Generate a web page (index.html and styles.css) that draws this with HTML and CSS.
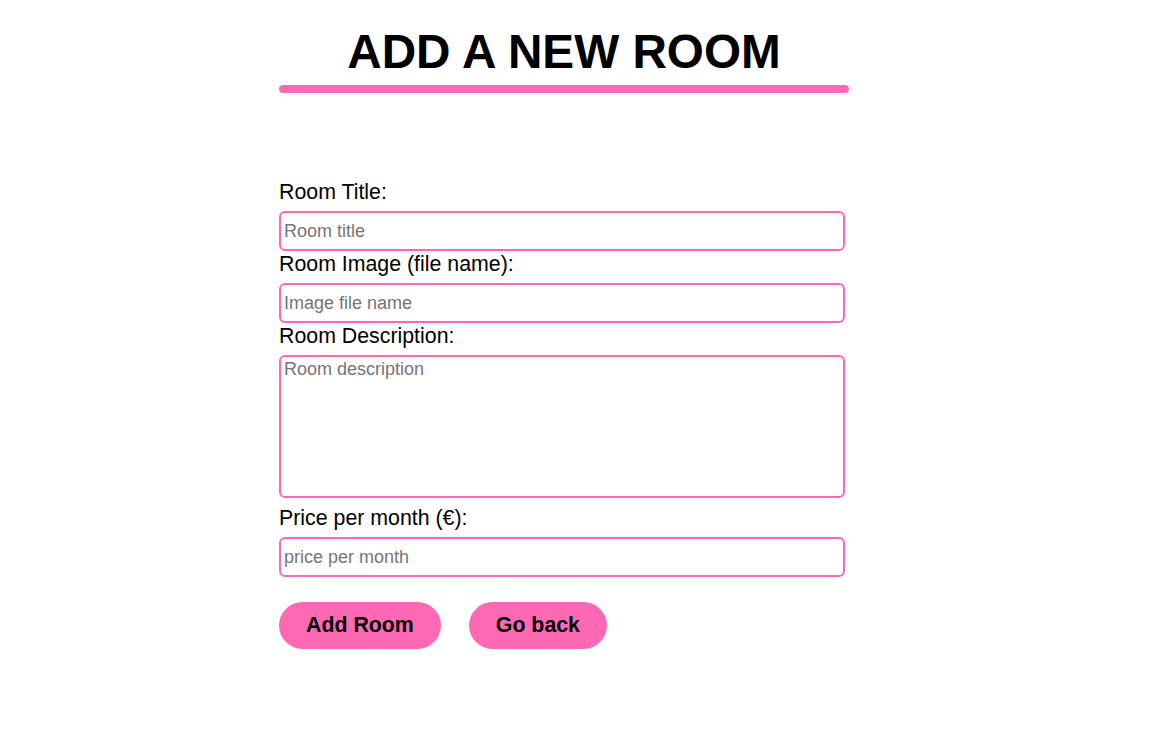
FILE: index.html
```html
<!DOCTYPE html>
<html lang="en">
<head>
<meta charset="utf-8">
<title>Add a new room</title>
<link rel="stylesheet" href="styles.css">
</head>
<body>
<main class="page">
  <header class="heading">
    <h1 class="title">ADD A NEW ROOM</h1>
    <div class="title-bar"></div>
  </header>
  <form class="room-form">
    <label class="field-label" for="title">Room Title:</label>
    <input class="field-input" id="title" type="text" placeholder="Room title">
    <label class="field-label" for="image">Room Image (file name):</label>
    <input class="field-input" id="image" type="text" placeholder="Image file name">
    <label class="field-label" for="desc">Room Description:</label>
    <textarea class="field-input field-area" id="desc" placeholder="Room description"></textarea>
    <label class="field-label" for="price">Price per month (€):</label>
    <input class="field-input" id="price" type="text" placeholder="price per month">
    <div class="actions">
      <button class="btn" type="submit">Add Room</button>
      <button class="btn" type="button">Go back</button>
    </div>
  </form>
</main>
</body>
</html>
```
FILE: styles.css
```css
html, body {
  margin: 0;
  padding: 0;
  background: #ffffff;
}
body {
  font-family: "Liberation Sans", Arial, sans-serif;
  color: #000;
}
.page {
  width: 570px;
  margin-left: 279px;
  padding-top: 24px;
}
.heading {
  display: flex;
  flex-direction: column;
  align-items: stretch;
}
.title {
  margin: 0;
  font-size: 47.7px;
  font-weight: bold;
  text-align: center;
  line-height: 55px;
}
.title-bar {
  height: 8px;
  margin-top: 6px;
  background: #ff69b4;
  border-radius: 4px;
}
.room-form {
  display: flex;
  flex-direction: column;
  align-items: flex-start;
  margin-top: 88px;
}
.field-label {
  font-size: 21.33px;
  line-height: 23px;
  margin-bottom: 7px;
}
.field-input {
  box-sizing: border-box;
  width: 566px;
  height: 40px;
  margin: 0 0 2px 0;
  padding: 0 3px;
  border: 2px solid #ff69b4;
  border-radius: 6px;
  font-family: "Liberation Sans", Arial, sans-serif;
  font-size: 18px;
  color: #000;
  background: #fff;
  outline: none;
}
.field-input::placeholder {
  color: #757575;
}
.field-area {
  height: 143px;
  padding-top: 2px;
  resize: none;
  margin-bottom: 9px;
}
.actions {
  display: flex;
  gap: 28px;
  margin-top: 23px;
}
.btn {
  font-family: "Liberation Sans", Arial, sans-serif;
  font-size: 21.33px;
  font-weight: bold;
  line-height: 24px;
  padding: 11px 27px 12px;
  border: none;
  border-radius: 24px;
  background: #ff69b4;
  color: #000;
  cursor: pointer;
}
```
